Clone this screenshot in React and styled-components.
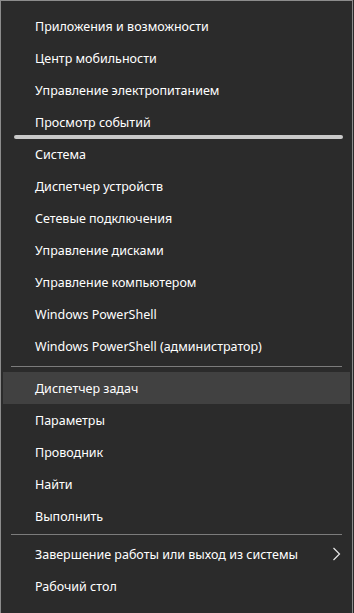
import styled, { createGlobalStyle } from 'styled-components';

const GlobalStyle = createGlobalStyle`
  html, body {
    margin: 0;
    padding: 0;
    background: #2b2b2b;
  }
  body {
    font-family: "Noto Sans", "Open Sans", sans-serif;
  }
`;

const groups = [
  [
    'Приложения и возможности',
    'Центр мобильности',
    'Управление электропитанием',
    'Просмотр событий',
    'Система',
    'Диспетчер устройств',
    'Сетевые подключения',
    'Управление дисками',
    'Управление компьютером',
    'Windows PowerShell',
    'Windows PowerShell (администратор)',
  ],
  ['Диспетчер задач', 'Параметры', 'Проводник', 'Найти', 'Выполнить'],
  ['Завершение работы или выход из системы', 'Рабочий стол'],
];

const Menu = styled.div`
  position: relative;
  box-sizing: border-box;
  width: 353px;
  height: 613px;
  padding: 9px 2px 0;
  background: #2b2b2b;
  border: 1px solid #8c8c8c;
  border-bottom: none;
  display: flex;
  flex-direction: column;
`;

const Row = styled.div`
  height: 32px;
  display: flex;
  align-items: center;
  padding-left: 32px;
  padding-right: 9px;
  background: ${(p) => (p.$active ? '#414141' : 'transparent')};
  color: #ffffff;
  font-size: 12.5px;
  white-space: nowrap;
`;

const Label = styled.span`
  flex: 1;
`;

const Separator = styled.div`
  height: 1px;
  margin: ${(p) => (p.$tight ? '2px 8px 3px' : '4px 8px 5px')};
  background: #7c7c7c;
`;

const DragBar = styled.div`
  position: absolute;
  left: 13px;
  right: 9px;
  top: 134px;
  height: 4px;
  border-radius: 2px;
  background: #c9c9c9;
`;

const Chevron = () => (
  <svg width="9" height="14" viewBox="0 0 9 14">
    <path d="M1.5 1 L7.5 7 L1.5 13" fill="none" stroke="#e8e8e8" strokeWidth="1.2" />
  </svg>
);

export default function App() {
  return (
    <>
      <GlobalStyle />
      <Menu>
        {groups.map((items, gi) => (
          <div key={gi}>
            {gi > 0 && <Separator $tight={gi === 2} />}
            {items.map((label) => (
              <Row key={label} $active={label === 'Диспетчер задач'}>
                <Label>{label}</Label>
                {label.startsWith('Завершение') && <Chevron />}
              </Row>
            ))}
          </div>
        ))}
        <DragBar />
      </Menu>
    </>
  );
}
